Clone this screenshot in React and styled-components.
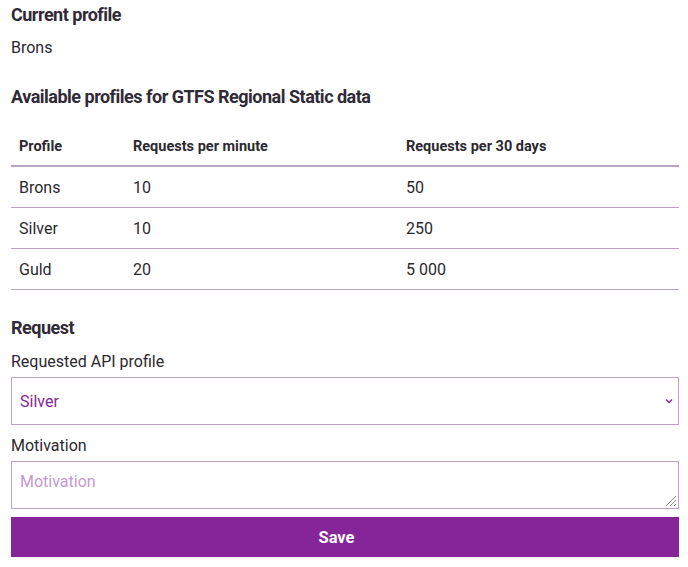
import React from "react";
import styled, { createGlobalStyle } from "styled-components";

const GlobalStyle = createGlobalStyle`
  body {
    margin: 0;
    background: #ffffff;
    font-family: Roboto, "Noto Sans", sans-serif;
    color: #2b2930;
  }
`;

const Page = styled.div`
  padding: 4px 9px 10px 11px;
  display: flex;
  flex-direction: column;
`;

const Heading = styled.h2`
  margin: ${(p) => p.$margin || "0"};
  font-size: 18px;
  font-weight: 700;
  line-height: 22px;
  color: #2f2a36;
  letter-spacing: -0.5px;
`;

const Value = styled.p`
  margin: 11px 0 27px;
  font-size: 16px;
  line-height: 22px;
`;

const Table = styled.table`
  width: 100%;
  table-layout: fixed;
  border-collapse: collapse;
  margin-top: 30px;
  font-size: 16px;
`;

const HeadCell = styled.th`
  text-align: left;
  font-size: 14.5px;
  font-weight: 700;
  line-height: 18px;
  padding: 0 8px 9px;
  border-bottom: 2px solid #b9a2c2;
  width: ${(p) => p.$width || "auto"};
`;

const Cell = styled.td`
  padding: 0 8px;
  height: 40px;
  border-bottom: 1px solid #b9a2c2;
`;

const Label = styled.label`
  display: block;
  font-size: 16px;
  line-height: 20px;
  margin-bottom: 5px;
`;

const SelectBox = styled.div`
  height: 48px;
  box-sizing: border-box;
  border: 1px solid #b9a2c2;
  display: flex;
  align-items: center;
  padding: 0 5px 0 8px;
  color: #86259a;
  font-size: 16px;
  margin-bottom: 11px;
`;

const Chevron = styled.svg`
  margin-left: auto;
  width: 8px;
  height: 6px;
`;

const TextArea = styled.div`
  position: relative;
  height: 48px;
  border: 1px solid #b9a2c2;
  padding: 10px 8px;
  box-sizing: border-box;
  color: #c49ad0;
  font-size: 16px;
  line-height: 20px;
`;

const Grip = styled.svg`
  position: absolute;
  right: 1px;
  bottom: 1px;
  width: 14px;
  height: 14px;
`;

const Button = styled.button`
  margin-top: 8px;
  height: 40px;
  border: 0;
  padding: 0 17px 0 0;
  background: #86259a;
  color: #ffffff;
  font-family: inherit;
  font-size: 16.5px;
  font-weight: 700;
`;

const rows = [
  ["Brons", "10", "50"],
  ["Silver", "10", "250"],
  ["Guld", "20", "5 000"],
];

export default function App() {
  return (
    <Page>
      <GlobalStyle />
      <Heading>Current profile</Heading>
      <Value>Brons</Value>
      <Heading>Available profiles for GTFS Regional Static data</Heading>
      <Table>
        <thead>
          <tr>
            <HeadCell $width="98px">Profile</HeadCell>
            <HeadCell $width="257px">Requests per minute</HeadCell>
            <HeadCell>Requests per 30 days</HeadCell>
          </tr>
        </thead>
        <tbody>
          {rows.map((r) => (
            <tr key={r[0]}>
              {r.map((c, i) => (
                <Cell key={i}>{c}</Cell>
              ))}
            </tr>
          ))}
        </tbody>
      </Table>
      <Heading $margin="27px 0 13px">Request</Heading>
      <Label>Requested API profile</Label>
      <SelectBox>
        Silver
        <Chevron viewBox="0 0 8 6">
          <path d="M1 1.5 L4 4.5 L7 1.5" fill="none" stroke="#86259a" strokeWidth="1.4" />
        </Chevron>
      </SelectBox>
      <Label>Motivation</Label>
      <TextArea>
        Motivation
        <Grip viewBox="0 0 14 14">
          <path d="M13 3 L3 13 M13 7 L7 13 M13 11 L11 13" stroke="#888" strokeWidth="1" />
        </Grip>
      </TextArea>
      <Button>Save</Button>
    </Page>
  );
}
